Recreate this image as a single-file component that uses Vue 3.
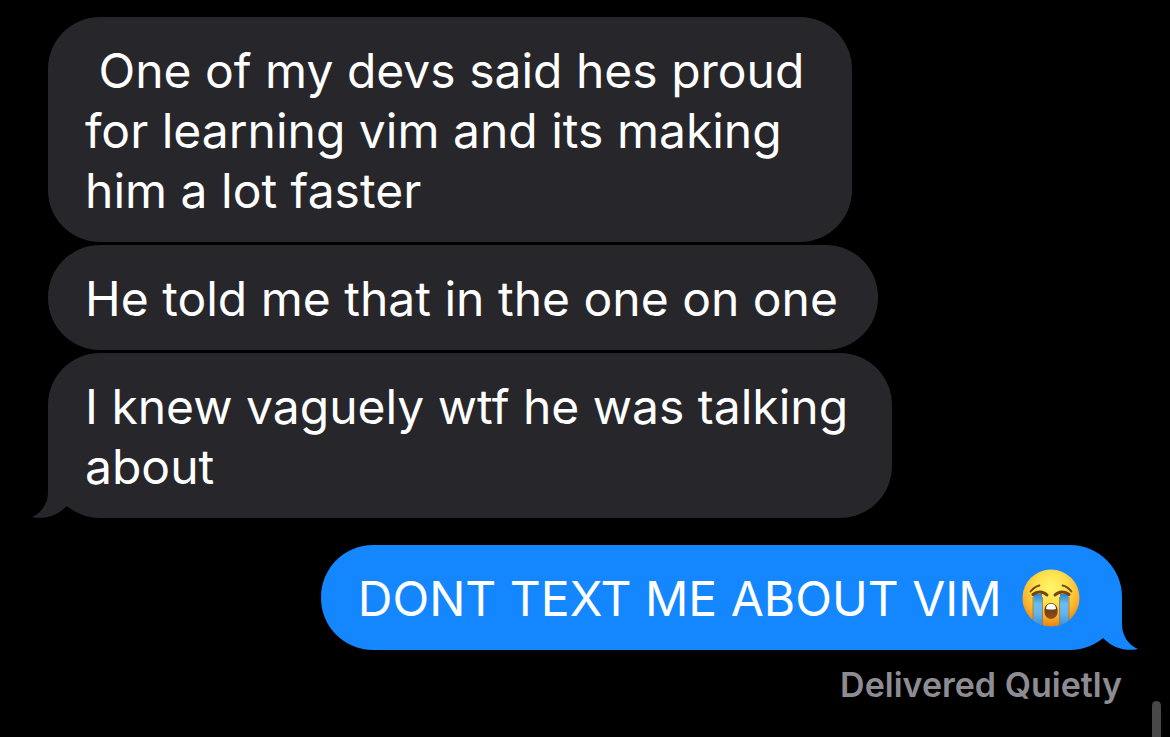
<script setup>
const received = [
  { id: 1, text: ' One of my devs said hes proud for learning vim and its making him a lot faster', size: 'narrow' },
  { id: 2, text: 'He told me that in the one on one', size: 'wide' },
  { id: 3, text: 'I knew vaguely wtf he was talking about', size: 'wide' },
]
const tail = 'M52 6 V34 C52 45 58 55 68 59 C54 62 42 57 33 48 V6 Z'
</script>

<template>
  <main class="chat">
    <section class="group received">
      <p v-for="(m, i) in received" :key="m.id" class="bubble" :class="m.size">{{ m.text }}<svg
        v-if="i === received.length - 1" class="tail" viewBox="0 0 70 60" aria-hidden="true"><path :d="tail" /></svg></p>
    </section>
    <section class="group sent">
      <p class="bubble wide">DONT TEXT ME ABOUT VIM <svg class="emoji" viewBox="0 0 58 58" role="img" aria-label="Loudly crying face">
        <defs>
          <radialGradient id="skin" cx="50%" cy="32%" r="70%">
            <stop offset="0" stop-color="#fff56c" />
            <stop offset="0.4" stop-color="#ffe04a" />
            <stop offset="0.72" stop-color="#fbb42c" />
            <stop offset="1" stop-color="#e57d10" />
          </radialGradient>
          <linearGradient id="tear" x1="0" y1="0" x2="0" y2="1">
            <stop offset="0" stop-color="#2f86cc" />
            <stop offset="0.3" stop-color="#6bbcf0" />
            <stop offset="0.6" stop-color="#62b4ec" />
            <stop offset="1" stop-color="#2f8ddb" />
          </linearGradient>
          <linearGradient id="mouth" x1="0" y1="0" x2="0" y2="1">
            <stop offset="0" stop-color="#553015" />
            <stop offset="1" stop-color="#925018" />
          </linearGradient>
          <clipPath id="face"><circle cx="29" cy="29" r="28.5" /></clipPath>
        </defs>
        <circle cx="29" cy="29" r="28.5" fill="url(#skin)" />
        <g clip-path="url(#face)">
          <path d="M11.500 25 H20 V58 H11.500 Z" fill="url(#tear)" />
          <path d="M38 25 H46.500 V58 H38 Z" fill="url(#tear)" />
          <path d="M11 28 V58 M20.500 28 V58 M37.500 28 V58 M47 28 V58" fill="none" stroke="#7d7a63" stroke-width="0.800" />
        </g>
        <g fill="none" stroke="#764312" stroke-linecap="round">
          <path d="M8.500 22.500 C11 19.500 14 17 17.500 16.500" stroke-width="1.800" />
          <path d="M40.500 16.500 C44 17 47 19.500 49.500 22.500" stroke-width="1.800" />
          <path d="M11 25.500 C15 22 21 22 25 26" stroke-width="3" />
          <path d="M33 26 C37 22 43 22 47 25.500" stroke-width="3" />
        </g>
        <rect x="22.500" y="34" width="13" height="16" rx="6.500" fill="url(#mouth)" />
        <path d="M24 40 C24 36.500 26 34.700 29 34.700 C32 34.700 34 36.500 34 40 C31 40.800 27 40.800 24 40 Z" fill="#fff" />
      </svg><svg class="tail" viewBox="0 0 70 60" aria-hidden="true"><path :d="tail" /></svg></p>
      <p class="status">Delivered Quietly</p>
    </section>
    <div class="scroll-thumb" aria-hidden="true"></div>
  </main>
</template>

<style>
body {
  background: #000;
}
</style>

<style scoped>
.chat {
  position: relative;
  box-sizing: border-box;
  min-height: 100vh;
  padding: 17px 48px 28px;
  overflow: hidden;
  display: flex;
  flex-direction: column;
  gap: 27px;
  background: #000;
  font-family: Inter, "Liberation Sans", sans-serif;
}
.group {
  display: flex;
  flex-direction: column;
  gap: 3px;
}
.received {
  align-items: flex-start;
}
.sent {
  align-items: flex-end;
}
.bubble {
  position: relative;
  box-sizing: border-box;
  margin: 0;
  padding: 24px 40px 21px 37px;
  border-radius: 52px;
  color: #fff;
  font-size: 48px;
  line-height: 60px;
  white-space: pre-wrap;
}
.narrow {
  max-width: 804px;
}
.wide {
  max-width: 844px;
}
.received .bubble {
  background: #27262b;
}
.sent .bubble {
  background: #1487ff;
}
.tail {
  position: absolute;
  bottom: 0;
  width: 70px;
  height: 60px;
}
.received .tail {
  left: -18px;
  transform: scaleX(-1);
  fill: #27262b;
}
.sent .tail {
  right: -18px;
  fill: #1487ff;
}
.emoji {
  width: 58px;
  height: 58px;
  margin: -8px 2px -8px 7px;
  vertical-align: -3px;
}
.status {
  margin: 12px 0 0;
  color: #8d8c93;
  font-size: 34px;
  font-weight: 600;
  line-height: 40px;
}
.scroll-thumb {
  position: absolute;
  right: 9px;
  bottom: -60px;
  width: 9px;
  height: 96px;
  border-radius: 5px;
  background: #484848;
}
</style>
